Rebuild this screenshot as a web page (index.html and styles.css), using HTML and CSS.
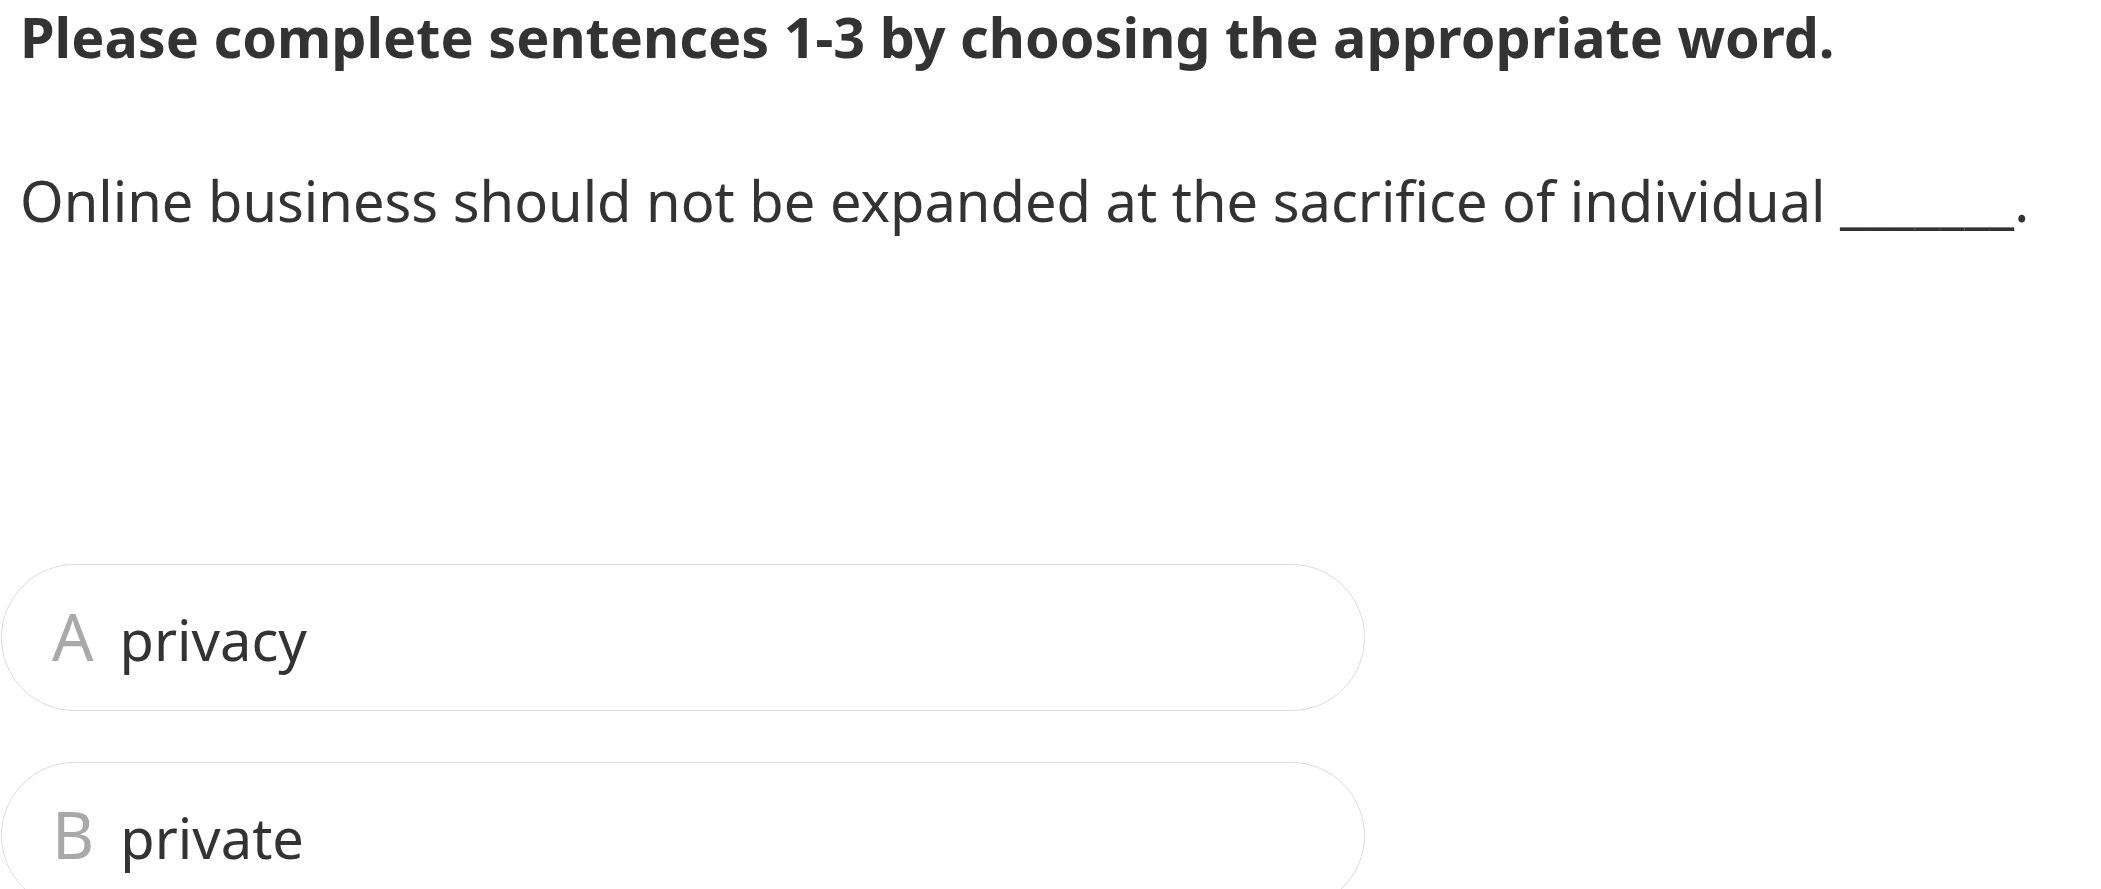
FILE: index.html
```html
<!DOCTYPE html>
<html lang="en">
<head>
<meta charset="utf-8">
<title>Quiz</title>
<link rel="stylesheet" href="styles.css">
</head>
<body>
<main class="quiz">
  <h1 class="title">Please complete sentences 1-3 by choosing the appropriate word.</h1>
  <p class="question">Online business should not be expanded at the sacrifice of individual _______.</p>
  <ul class="options">
    <li class="option"><span class="letter">A</span><span class="word">privacy</span></li>
    <li class="option"><span class="letter">B</span><span class="word">private</span></li>
  </ul>
</main>
</body>
</html>
```
FILE: styles.css
```css
html, body {
  margin: 0;
  padding: 0;
  background: #fff;
  overflow: hidden;
}
.quiz {
  font-family: "Noto Sans", "Open Sans", sans-serif;
  color: #333;
  height: 889px;
}
.title {
  margin: 0;
  padding-left: 20px;
  font-size: 55.7px;
  line-height: 72px;
  font-weight: bold;
  white-space: nowrap;
}
.question {
  margin: 92px 0 0;
  padding-left: 20px;
  font-size: 56px;
  line-height: 72px;
  white-space: nowrap;
}
.options {
  list-style: none;
  margin: 328px 0 0;
  padding: 0 0 0 1px;
  display: flex;
  flex-direction: column;
  gap: 51px;
}
.option {
  box-sizing: border-box;
  width: 1364px;
  height: 147px;
  border: 1.5px solid #dcdcdc;
  border-radius: 74px;
  display: flex;
  align-items: baseline;
  padding: 35px 0 0 50px;
}
.letter {
  font-size: 65px;
  line-height: 72px;
  color: #a9a9a9;
  margin-right: 26px;
}
.word {
  font-size: 56px;
  line-height: 72px;
  color: #333;
}
```
